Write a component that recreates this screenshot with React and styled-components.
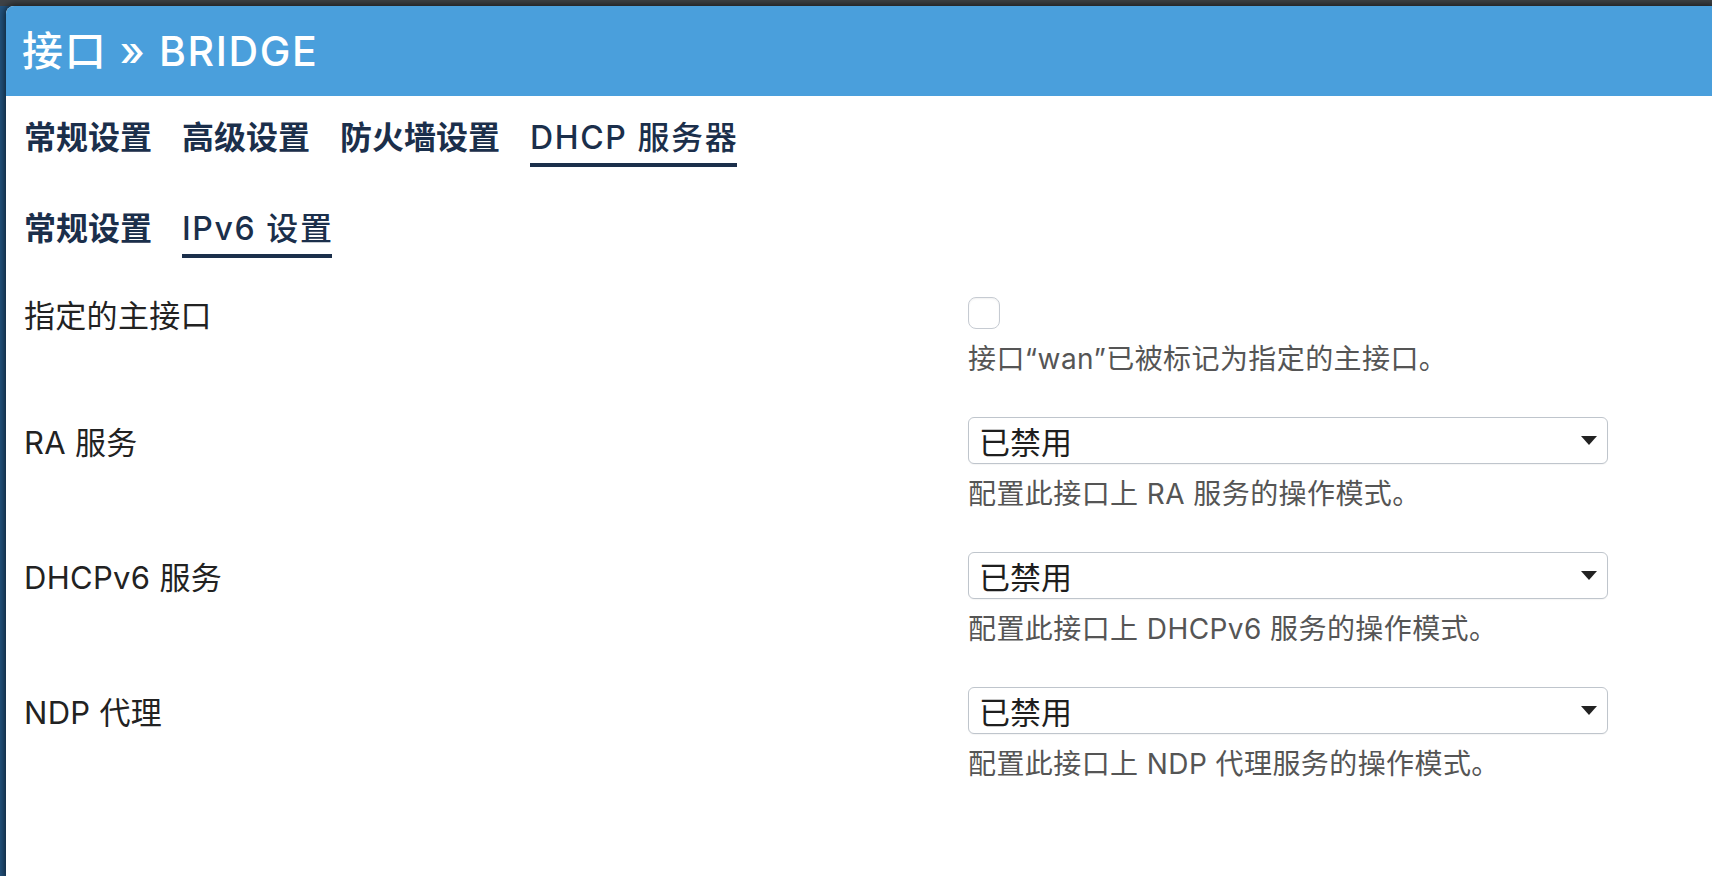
import React from "react";
import styled, { createGlobalStyle } from "styled-components";

const GlobalStyle = createGlobalStyle`
  html, body {
    margin: 0;
    padding: 0;
    height: 100%;
  }
  body {
    font-family: Inter, "Noto Sans CJK SC", sans-serif;
    background: #27527a;
    overflow: hidden;
  }
`;

const Backdrop = styled.div`
  height: 876px;
  box-sizing: border-box;
  padding: 6px 0 0 6px;
  background: linear-gradient(to bottom, #3e4246 0, #3e4246 6px, #22527d 6px, #22527d 100%);
  display: flex;
`;

const Modal = styled.div`
  flex: 1;
  background: #ffffff;
  border-top-left-radius: 8px;
  overflow: hidden;
  box-shadow: 0 0 6px 2px rgba(0, 0, 0, 0.55);
  display: flex;
  flex-direction: column;
`;

const Header = styled.div`
  height: 90px;
  background: #4a9fdc;
  display: flex;
  align-items: center;
  padding-left: 16px;
`;

const Title = styled.h2`
  margin: 0;
  color: #ffffff;
  font-size: 41px;
  font-weight: 500;
  letter-spacing: 0.04em;
  line-height: 1;
`;

const Body = styled.div`
  padding: 0 18px;
`;

const TabBar = styled.div`
  display: flex;
  gap: 30px;
  margin-top: ${(p) => p.$top}px;
`;

const Tab = styled.div`
  font-size: 32px;
  font-weight: 700;
  line-height: 40px;
  color: #1b2f4b;
  padding-bottom: 5px;
  border-bottom: 4px solid ${(p) => (p.$active ? "#1b2f4b" : "transparent")};
  white-space: nowrap;
`;

const TabLabel = styled.span`
  font-weight: ${(p) => (p.$light ? 500 : 700)};
  letter-spacing: ${(p) => (p.$light ? "0.05em" : "0")};
  margin-right: ${(p) => (p.$light ? "-0.05em" : "0")};
`;

const Form = styled.div`
  padding-top: 39px;
  display: flex;
  flex-direction: column;
  gap: 38px;
`;

const Row = styled.div`
  display: flex;
  align-items: flex-start;
`;

const Label = styled.div`
  width: 944px;
  flex-shrink: 0;
  font-size: 31px;
  color: #222222;
  height: ${(p) => p.$h}px;
  display: flex;
  align-items: center;
  letter-spacing: 0.01em;
`;

const Field = styled.div`
  display: flex;
  flex-direction: column;
  align-items: flex-start;
`;

const Checkbox = styled.div`
  width: 32px;
  height: 32px;
  box-sizing: border-box;
  border: 1.5px solid #c6cbd2;
  border-radius: 8px;
  background: #fff;
  box-shadow: inset 0 1px 2px rgba(0, 0, 0, 0.06);
`;

const Select = styled.div`
  width: 640px;
  height: 47px;
  box-sizing: border-box;
  border: 1px solid #bfc5cc;
  border-radius: 6px;
  display: flex;
  align-items: center;
  justify-content: space-between;
  padding: 0 10px 0 10px;
  font-size: 31px;
  color: #1e1e1e;
  background: #fff;
  box-shadow: 0 1px 1px rgba(0, 0, 0, 0.04);
`;

const Arrow = styled.svg`
  width: 16px;
  height: 10px;
  flex-shrink: 0;
`;

const Desc = styled.div`
  margin-top: 10px;
  font-size: 28px;
  line-height: 40px;
  letter-spacing: 0.015em;
  color: #555555;
  white-space: nowrap;
`;

const Caret = () => (
  <Arrow viewBox="0 0 16 10">
    <path d="M0 0 H16 L8 9 Z" fill="#222" />
  </Arrow>
);

const SelectRow = ({ label, value, desc }) => (
  <Row>
    <Label $h={47}>{label}</Label>
    <Field>
      <Select>
        <span>{value}</span>
        <Caret />
      </Select>
      <Desc>{desc}</Desc>
    </Field>
  </Row>
);

export default function App() {
  return (
    <>
      <GlobalStyle />
      <Backdrop>
        <Modal>
          <Header>
            <Title>接口 » BRIDGE</Title>
          </Header>
          <Body>
            <TabBar $top={22}>
              <Tab>常规设置</Tab>
              <Tab>高级设置</Tab>
              <Tab>防火墙设置</Tab>
              <Tab $active>
                <TabLabel $light>DHCP 服务器</TabLabel>
              </Tab>
            </TabBar>
            <TabBar $top={42}>
              <Tab>常规设置</Tab>
              <Tab $active>
                <TabLabel $light>IPv6 设置</TabLabel>
              </Tab>
            </TabBar>
            <Form>
              <Row>
                <Label $h={32}>指定的主接口</Label>
                <Field>
                  <Checkbox />
                  <Desc>接口“wan”已被标记为指定的主接口。</Desc>
                </Field>
              </Row>
              <SelectRow label="RA 服务" value="已禁用" desc="配置此接口上 RA 服务的操作模式。" />
              <SelectRow label="DHCPv6 服务" value="已禁用" desc="配置此接口上 DHCPv6 服务的操作模式。" />
              <SelectRow label="NDP 代理" value="已禁用" desc="配置此接口上 NDP 代理服务的操作模式。" />
            </Form>
          </Body>
        </Modal>
      </Backdrop>
    </>
  );
}
